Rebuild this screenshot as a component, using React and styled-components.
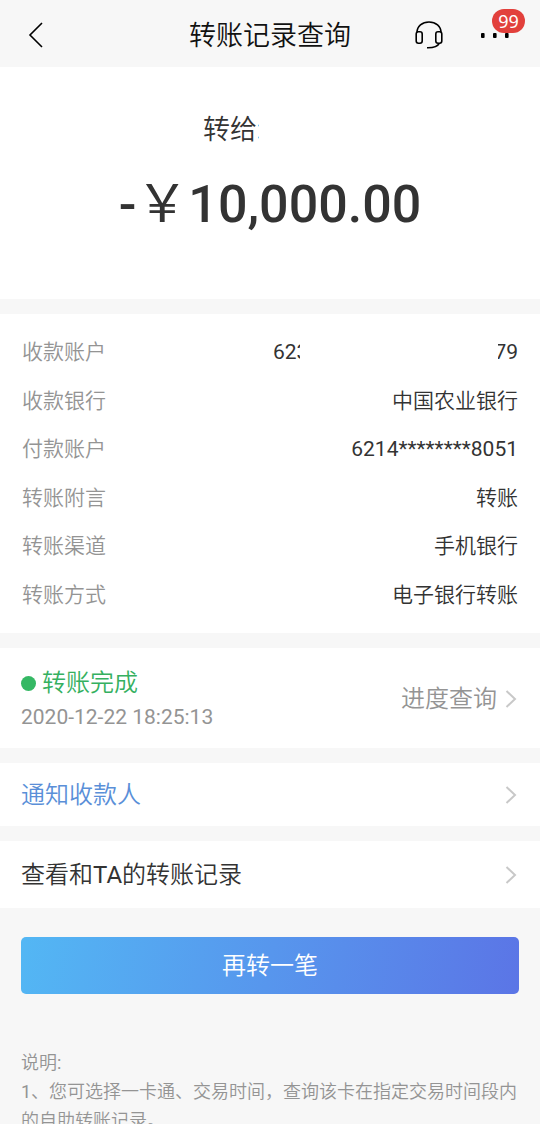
import styled, { createGlobalStyle } from "styled-components";

const details = [
  { label: "收款银行", value: "中国农业银行" },
  { label: "付款账户", value: "6214********8051" },
  { label: "转账附言", value: "转账" },
  { label: "转账渠道", value: "手机银行" },
  { label: "转账方式", value: "电子银行转账" },
];

const Chevron = () => (
  <ChevronIcon viewBox="0 0 14 20" aria-hidden="true">
    <path d="M1.5 2 10 10 1.5 18" />
  </ChevronIcon>
);

const App = () => {
  return (
    <Page>
      <GlobalStyle />

      <Header>
        <IconButton aria-label="返回">
          <svg width="28" height="28" viewBox="0 0 28 28">
            <path d="M20 2 8 14 20 26" strokeWidth="1.6" />
          </svg>
        </IconButton>
        <Title>转账记录查询</Title>
        <Actions>
          <IconButton aria-label="客服">
            <svg width="28" height="28" viewBox="0 0 28 28">
              <path d="M2 11.5C2 5.4 7.2 1 14 1s12 4.4 12 10.5" />
              <rect x="1.2" y="10.8" width="6" height="11.4" rx="2.2" />
              <rect x="20.8" y="10.8" width="6" height="11.4" rx="2.2" />
              <path d="M24.5 22.2c-1.6 3-5.2 4.8-12.5 4.6" />
            </svg>
          </IconButton>
          <IconButton aria-label="更多">
            <svg width="28" height="28" viewBox="0 0 28 28">
              <g fill="#000" stroke="none">
                <rect x="0" y="12" width="3.6" height="5" rx="1" />
                <rect x="12" y="12" width="3.6" height="5" rx="1" />
                <rect x="24" y="12" width="3.6" height="5" rx="1" />
              </g>
            </svg>
            <Badge>99</Badge>
          </IconButton>
        </Actions>
      </Header>

      <Summary>
        <Payee>
          转给<Clipped $width={2} $align="flex-end">:</Clipped>
        </Payee>
        <Amount>
          <span>-</span>
          <Currency>￥</Currency>
          <span>10,000.00</span>
        </Amount>
      </Summary>

      <Details>
        <DetailRow>
          <dt>收款账户</dt>
          <dd>
            <MaskedAccount>
              <span>
                62<Clipped $width={3}>3</Clipped>
              </span>
              <span>
                <Clipped $width={8} $align="flex-end">7</Clipped>9
              </span>
            </MaskedAccount>
          </dd>
        </DetailRow>
        {details.map((item) => (
          <DetailRow key={item.label}>
            <dt>{item.label}</dt>
            <dd>{item.value}</dd>
          </DetailRow>
        ))}
      </Details>

      <StatusCard>
        <div>
          <Status>
            <Dot />
            转账完成
          </Status>
          <Time>2020-12-22 18:25:13</Time>
        </div>
        <Progress href="#progress">
          进度查询
          <Chevron />
        </Progress>
      </StatusCard>

      <LinkRow href="#notify" $height={63} $color="#5a8fd8">
        <span>通知收款人</span>
        <Chevron />
      </LinkRow>
      <LinkRow href="#records" $height={67} $color="#333">
        <span>查看和TA的转账记录</span>
        <Chevron />
      </LinkRow>

      <Footer>
        <SubmitButton>再转一笔</SubmitButton>
        <Notes>
          <p>说明:</p>
          <p>
            1、您可选择一卡通、交易时间，查询该卡在指定交易时间段内的自助转账记录。
          </p>
        </Notes>
      </Footer>
    </Page>
  );
};

export default App;

const GlobalStyle = createGlobalStyle`
  * {
    box-sizing: border-box;
  }

  body {
    margin: 0;
    background-color: #f7f7f7;
    font-family: Roboto, "Noto Sans CJK SC DemiLight", "Noto Sans CJK SC", sans-serif;
  }

  p, h1, dl, dd {
    margin: 0;
  }
`;

const Page = styled.main`
  display: flex;
  flex-direction: column;
  gap: 15px;
  height: 100vh;
  overflow: hidden;
  color: #333;

  > * {
    flex-shrink: 0;
  }
`;

const Header = styled.header`
  display: grid;
  grid-template-columns: 1fr auto 1fr;
  align-items: center;
  height: 67px;
  margin-bottom: -15px;
  padding: 2px 31px 0 22px;
`;

const Title = styled.h1`
  padding: 2px 0 0 9px;
  color: #111;
  font-size: 27px;
  font-weight: 400;
  line-height: 40px;
`;

const Actions = styled.div`
  display: flex;
  justify-content: flex-end;
  gap: 38px;
`;

const IconButton = styled.button`
  position: relative;
  width: 28px;
  height: 28px;
  padding: 0;
  border: none;
  background: none;
  cursor: pointer;

  svg {
    display: block;
    fill: none;
    stroke: #000;
    stroke-width: 1.6;
  }
`;

const Badge = styled.span`
  position: absolute;
  top: -12px;
  right: -16px;
  width: 33px;
  border-radius: 12px;
  background-color: #e2403c;
  color: #fff;
  font-family: "Noto Sans", sans-serif;
  font-size: 18px;
  line-height: 24px;
  text-align: center;
`;

const Summary = styled.section`
  display: flex;
  flex-direction: column;
  align-items: center;
  height: 232px;
  padding-top: 43px;
  background-color: #fff;
`;

const Payee = styled.p`
  display: flex;
  gap: 1px;
  width: 134px;
  font-size: 27px;
  line-height: 40px;
`;

const Clipped = styled.span`
  display: inline-flex;
  justify-content: ${({ $align }) => $align || "flex-start"};
  width: ${({ $width }) => $width}px;
  overflow: hidden;
  vertical-align: bottom;
`;

const Amount = styled.p`
  display: flex;
  align-items: baseline;
  margin-top: 18px;
  font-size: 52px;
  font-weight: 500;
  line-height: 64px;
`;

const Currency = styled.span`
  font-family: "Noto Sans CJK SC", sans-serif;
  font-weight: 400;
`;

const Details = styled.dl`
  display: grid;
  grid-auto-rows: 1fr;
  min-height: 319px;
  padding: 14px 22px;
  background-color: #fff;
`;

const DetailRow = styled.div`
  display: flex;
  align-items: center;
  justify-content: space-between;
  font-size: 21px;
  line-height: 30px;

  dt {
    color: #949494;
  }
`;

const MaskedAccount = styled.span`
  display: flex;
  justify-content: space-between;
  width: 245px;
`;

const StatusCard = styled.section`
  display: flex;
  align-items: center;
  justify-content: space-between;
  min-height: 100px;
  padding: 2px 21px 0;
  background-color: #fff;
`;

const Status = styled.p`
  display: flex;
  align-items: center;
  gap: 6px;
  color: #35b060;
  font-size: 24px;
  line-height: 36px;
`;

const Dot = styled.span`
  width: 15px;
  height: 15px;
  border-radius: 50%;
  background-color: #35b864;
`;

const Time = styled.p`
  color: #949494;
  font-size: 21px;
  line-height: 32px;
`;

const Progress = styled.a`
  display: flex;
  align-items: center;
  gap: 8px;
  color: #949494;
  font-size: 24px;
  line-height: 36px;
  text-decoration: none;
`;

const ChevronIcon = styled.svg`
  width: 14px;
  height: 20px;
  fill: none;
  stroke: #c8c8c8;
  stroke-width: 2;
`;

const LinkRow = styled.a`
  display: flex;
  align-items: center;
  justify-content: space-between;
  min-height: ${({ $height }) => $height}px;
  padding: 0 21px;
  background-color: #fff;
  color: ${({ $color }) => $color};
  font-size: 24px;
  text-decoration: none;

  span {
    padding-bottom: 4px;
  }
`;

const Footer = styled.footer`
  padding: 14px 21px;
`;

const SubmitButton = styled.button`
  display: block;
  width: 100%;
  height: 57px;
  padding: 0 0 4px;
  border: none;
  border-radius: 5px;
  background: linear-gradient(100deg, #53b7f4, #5b75e6);
  color: #fff;
  font-family: inherit;
  font-size: 24px;
  cursor: pointer;
`;

const Notes = styled.div`
  margin-top: 54px;
  color: #949494;
  font-size: 18px;
  line-height: 29px;
`;
